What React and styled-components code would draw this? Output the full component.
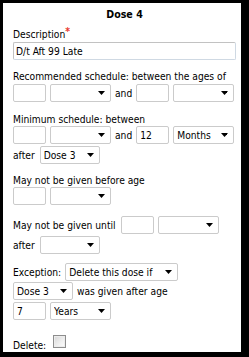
import React from "react";
import styled, { createGlobalStyle } from "styled-components";

const GlobalStyle = createGlobalStyle`
  html, body {
    margin: 0;
    padding: 0;
    background: #000;
  }
  body {
    font-family: "DejaVu Sans Condensed", "Liberation Sans", sans-serif;
    font-size: 10.2px;
    color: #000;
  }
`;

const Panel = styled.div`
  box-sizing: border-box;
  width: 238px;
  height: 349px;
  margin: 3px;
  padding: 4px 5px 0 10px;
  background: #fff;
`;

const Title = styled.div`
  font-weight: bold;
  font-size: 10.6px;
  text-align: center;
  line-height: 14px;
`;

const Label = styled.div`
  line-height: 13px;
  margin-top: ${(p) => p.$mt || 0}px;
  white-space: nowrap;
`;

const Required = styled.span`
  color: #e8362d;
  font-weight: bold;
  position: relative;
  top: -3px;
`;

const Row = styled.div`
  display: flex;
  align-items: center;
  gap: 4px;
  height: 18px;
  margin-top: ${(p) => p.$mt || 0}px;
  white-space: nowrap;
`;

const Text = styled.span`
  line-height: 13px;
  margin-right: ${(p) => p.$mr || 0}px;
`;

const TextBox = styled.input`
  box-sizing: border-box;
  width: ${(p) => p.$w || 33}px;
  height: 18px;
  margin: 0;
  padding: 0 3px;
  border: 1px solid #cbcbcb;
  border-radius: 2px;
  font: inherit;
  color: #000;
  background: #fff;
  outline: none;
  flex: none;
`;

const WideBox = styled(TextBox)`
  width: 100%;
  margin-top: 1px;
  padding: 0 2px;
  border-color: #c2c2c2 #cfd9e3 #cfd9e3 #c2c2c2;
  display: block;
`;

const SelectWrap = styled.span`
  position: relative;
  display: inline-block;
  width: ${(p) => p.$w || 61}px;
  height: 18px;
  flex: none;
`;

const SelectBox = styled.select`
  appearance: none;
  -webkit-appearance: none;
  box-sizing: border-box;
  width: 100%;
  height: 18px;
  margin: 0;
  padding: 0 14px 0 3px;
  border: 1px solid #cbcbcb;
  border-radius: 2px;
  background: #fff;
  font: inherit;
  color: #000;
  outline: none;
`;

const Arrow = styled.svg`
  position: absolute;
  right: 6px;
  top: 7px;
  pointer-events: none;
`;

const Check = styled.input`
  appearance: none;
  -webkit-appearance: none;
  box-sizing: border-box;
  width: 13px;
  height: 13px;
  margin: 0 0 0 3px;
  border: 1px solid #8d8d8d;
  background: linear-gradient(135deg, #d6d6d6 0%, #f0f0f0 60%, #fdfdfd 100%);
  box-shadow: inset 0 0 0 1px #ececec;
  position: relative;
  top: -4px;
`;

const Select = ({ w, value }) => (
  <SelectWrap $w={w}>
    <SelectBox defaultValue={value || ""}>
      <option value="">{""}</option>
      {value ? <option value={value}>{value}</option> : null}
    </SelectBox>
    <Arrow width="7" height="4" viewBox="0 0 7 4">
      <path d="M0 0H7L3.5 4Z" fill="#000" />
    </Arrow>
  </SelectWrap>
);

export default function App() {
  return (
    <>
      <GlobalStyle />
      <Panel>
        <Title>Dose 4</Title>

        <Label $mt={7}>
          Description<Required>*</Required>
        </Label>
        <WideBox type="text" defaultValue="D/t Aft 99 Late" />

        <Label $mt={10}>Recommended schedule: between the ages of</Label>
        <Row $mt={1}>
          <TextBox type="text" />
          <Select />
          <Text>and</Text>
          <TextBox type="text" />
          <Select />
        </Row>

        <Label $mt={11}>Minimum schedule: between</Label>
        <Row>
          <TextBox type="text" />
          <Select />
          <Text>and</Text>
          <TextBox type="text" defaultValue="12" />
          <Select value="Months" />
        </Row>
        <Row $mt={2}>
          <Text $mr={1}>after</Text>
          <Select w={60} value="Dose 3" />
        </Row>

        <Label $mt={10}>May not be given before age</Label>
        <Row>
          <TextBox type="text" />
          <Select />
        </Row>

        <Row $mt={11}>
          <Text $mr={1}>May not be given until</Text>
          <TextBox type="text" />
          <Select />
        </Row>
        <Row $mt={2}>
          <Text $mr={1}>after</Text>
          <Select w={60} />
        </Row>

        <Row $mt={9}>
          <Text>Exception:</Text>
          <Select w={113} value="Delete this dose if" />
        </Row>
        <Row $mt={1}>
          <Select w={60} value="Dose 3" />
          <Text>was given after age</Text>
        </Row>
        <Row $mt={2}>
          <TextBox type="text" defaultValue="7" />
          <Select value="Years" />
        </Row>

        <Row $mt={16}>
          <Text>Delete:</Text>
          <Check type="checkbox" />
        </Row>
      </Panel>
    </>
  );
}
